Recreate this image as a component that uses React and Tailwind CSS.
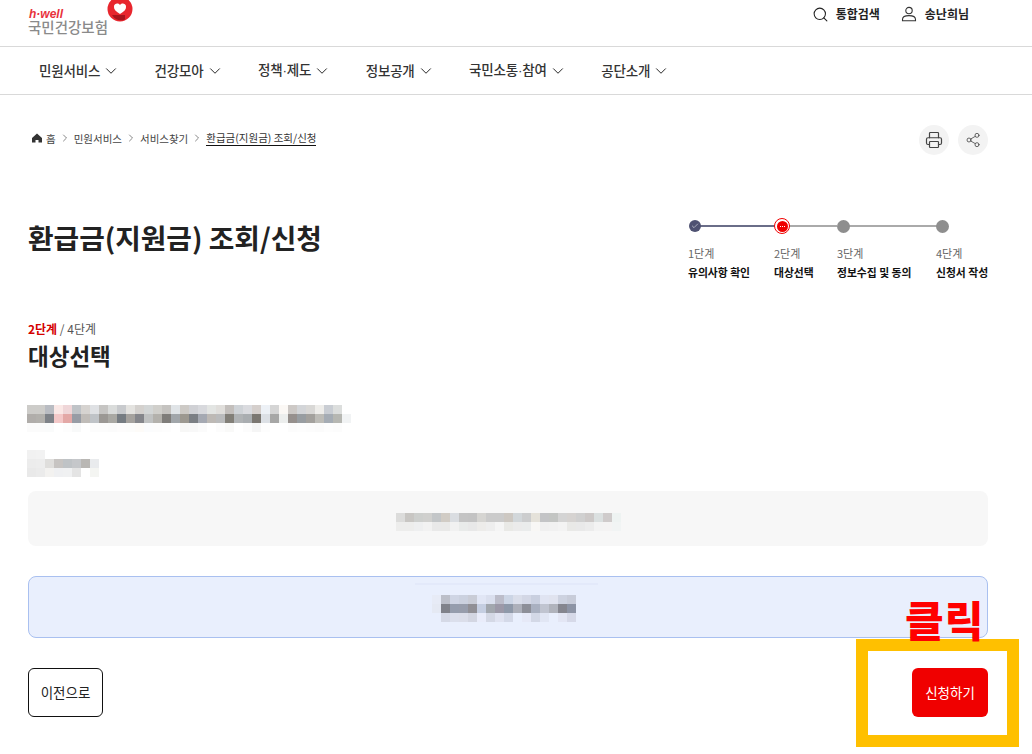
import { ChevronDown, ChevronRight, Search, Printer, Share2, Check } from "lucide-react";

const NAV_ITEMS = ["민원서비스", "건강모아", "정책·제도", "정보공개", "국민소통·참여", "공단소개"];

const STEPS = [
  { label: "1단계", name: "유의사항 확인", state: "done", width: "w-[62px]" },
  { label: "2단계", name: "대상선택", state: "current", width: "w-[39px]" },
  { label: "3단계", name: "정보수집 및 동의", state: "todo", width: "w-[75px]" },
  { label: "4단계", name: "신청서 작성", state: "last", width: "w-[52px]" },
];

// blurred-out personal data, one array per row of the mosaic
const BLUR_NOTICE = [
  ["#cdccc9", "#cdccc9", "#b9bcc2", "#fae8e6", "#efd6d8", "#bfc3c7", "#d6d3d0", "#dfe1e4", "#c6c5c3", "#dadcdb", "#c8cacd", "#e4e3e0", "#d4d1ce", "#d3d6d6", "#d0cfcb", "#c5c3c0", "#e0e4e7", "#cdcac6", "#d0d1d5", "#d8d9dd", "#e3e5e3", "#e0dedb", "#c3bfbc", "#cfd3d7", "#dadbdf", "#d5cfcc", "#edf1f6", "#d5d5d5", "#fbf8f5", "#cdc9c6", "#d3d5d8", "#d9d8d6", "#eeedea", "#c9cdd3", "#dcdedd", "#ffffff"],
  ["#b0adaa", "#b2b0ac", "#7e8288", "#f3c8c8", "#e3a8a6", "#979ca5", "#c0bcb8", "#bfc3c7", "#9b9894", "#a9a8a3", "#767c82", "#a5a29e", "#85868b", "#c0c2c2", "#b3b1ac", "#7f7d7a", "#a1a6aa", "#9c9890", "#7b7f84", "#a5a9b2", "#bdb9b5", "#babbbc", "#827f78", "#b0b3b5", "#a9adb0", "#7b7771", "#dce0e5", "#a7a7a6", "#eceeed", "#96908d", "#989da1", "#a3a19d", "#bdbcb7", "#a5acb4", "#b6b7b2", "#f1f3f4"],
  ["#fbfbfb", "#fbfbfb", "#fafbfb", "#ffffff", "#fdfdfd", "#f8f9f9", "#ffffff", "#fcfcfc", "#fcfcfc", "#fbfbfb", "#fdfcfc", "#fcfcfb", "#fdfbf8", "#fbfcfd", "#fcfcfc", "#fdfdfd", "#ffffff", "#f7f7f6", "#f8f8f8", "#fbfbfb", "#ffffff", "#fcfcfc", "#f9f9f8", "#ffffff", "#fcfcfc", "#f5f5f5", "#fdfdfd", "#ffffff", "#ffffff", "#fcfcfc", "#fdfdfd", "#fcfcfc", "#fbfbfb", "#fdfdfd", "#fcfcfc", "#ffffff"],
];

const BLUR_NAME = [
  ["#f1f1f1", "#f2f2f2", "#ffffff", "#ffffff", "#ffffff", "#ffffff", "#ffffff", "#ffffff"],
  ["#ececec", "#ededed", "#dfdedc", "#c7c4c2", "#bfc3c6", "#c5c7ca", "#b9b7b4", "#e9ebed"],
  ["#e9e9e9", "#ebebeb", "#f3f2f0", "#eff0f2", "#f0f1f2", "#e4e4e4", "#ffffff", "#f4f5f2"],
];

const BLUR_INFO = [
  ["#dcdcdb", "#c8c6c3", "#cdcfcd", "#d0d0ce", "#c3c6c8", "#d1ccc5", "#dadde1", "#c4c4c4", "#c3c3c3", "#d6d5d2", "#cbcbcb", "#cbcbcb", "#cdc8c2", "#d2d7da", "#cccdce", "#e5e2da", "#c3c4c6", "#c3c5c3", "#d4d4d4", "#d6d3d1", "#d0d0d0", "#cdc9c8", "#dbe0e0", "#cfcbcb", "#eef3f2"],
  ["#ededec", "#ededec", "#eeeff0", "#f2f2f2", "#e9e9e9", "#e9e9e8", "#f1f1f1", "#e9ebea", "#e8e8e8", "#edecea", "#eeeeee", "#f5f5f5", "#e9e9e6", "#ebebeb", "#eaecec", "#f8f7f5", "#f0f0f0", "#f1f1f1", "#f3f3f3", "#e9e9e7", "#e9e9e9", "#ececec", "#f3f3f3", "#f4f3f3", "#f1f4f4"],
];

const BLUR_BUTTON = [
  ["#e7ebf6", "#bcbfc9", "#cfd5e4", "#cbd1df", "#c9ccd6", "#e1e6f5", "#dadfee", "#bcbdca", "#ccd5e5", "#dadeea", "#d3d7e5", "#c9cfdf", "#e0e4f2", "#e0e3ef", "#cdd2e0", "#c8ccd9"],
  ["#e5e9f3", "#80828a", "#959dad", "#979dac", "#908f95", "#c5cee1", "#a2a7ae", "#9c99a8", "#8f99a9", "#adb0ba", "#8d8f98", "#a9b0c0", "#c0c4d0", "#b0b3bc", "#85868f", "#8d94a5"],
  ["#e9effd", "#d5d9e6", "#dbdfec", "#dbdeea", "#d3d6e2", "#e9ecfa", "#d4d8e5", "#e0e3f1", "#d4d9e8", "#e9effd", "#e6e9f7", "#d3d8e6", "#e1e6f4", "#e9effd", "#e3e6f4", "#d6d9e8"],
];

const Mosaic = ({ rows, size }) => (
  <div>
    {rows.map((row, y) => (
      <div key={y} className="flex">
        {row.map((color, x) => (
          <div key={x} style={{ width: size, height: size, background: color }} />
        ))}
      </div>
    ))}
  </div>
);

const StepDot = ({ state }) => {
  if (state === "done") {
    return (
      <div className="ml-[1px] flex h-[12px] w-[12px] items-center justify-center rounded-full bg-[#4f5272]">
        <Check size={8} strokeWidth={2} className="text-[#d5d6e0]" />
      </div>
    );
  }
  if (state === "current") {
    return (
      <div className="flex h-[16px] w-[16px] items-center justify-center rounded-full border border-[#f00000] bg-white">
        <div className="flex h-[11px] w-[11px] items-center justify-center gap-[1px] rounded-full bg-[#f00000]">
          <span className="h-[1px] w-[1px] bg-white" />
          <span className="h-[1px] w-[1px] bg-white" />
          <span className="h-[1px] w-[1px] bg-white" />
        </div>
      </div>
    );
  }
  return <div className="h-[13px] w-[13px] rounded-full bg-[#8e8e8e]" />;
};

const Stepper = () => (
  <div className="mt-[63px] flex gap-[24px]">
    {STEPS.map((step, index) => (
      <div key={step.label} className={`relative ${step.width}`}>
        {index < 3 && (
          <div
            className={`absolute left-[8px] top-[7px] h-[2px] ${
              step.state === "done" ? "bg-[#6a6d88]" : "bg-[#aaaaaa]"
            } ${index === 0 ? "w-[80px]" : index === 1 ? "w-[55px]" : "w-[92px]"}`}
          />
        )}
        <div className="relative flex h-[16px] items-center">
          <StepDot state={step.state} />
        </div>
        <div className="mt-[10px] whitespace-nowrap text-[11px] leading-[18px] text-[#666666]">{step.label}</div>
        <div className="mt-[1px] whitespace-nowrap text-[10.8px] font-bold leading-[18px] text-[#111111]">{step.name}</div>
      </div>
    ))}
  </div>
);

const NavLabel = ({ text }) => {
  // the middle dot comes out narrower in the reference
  const [left, right] = text.split("·");
  if (!right) return <span>{text}</span>;
  return (
    <span>
      {left}
      <span className="font-['Liberation_Sans',sans-serif]">·</span>
      {right}
    </span>
  );
};

export default function App() {
  return (
    <div className="relative h-[754px] w-[1032px] overflow-hidden bg-white font-['Noto_Sans_CJK_KR',sans-serif] text-[#222222]">
      {/* top header */}
      <header className="flex h-[47px] items-start justify-between border-b border-[#d9d9d9] pl-[28px] pr-[63px]">
        <div className="relative h-[36px] w-[110px]">
          <div className="absolute left-[1px] top-[9px] font-['Liberation_Sans',sans-serif] text-[12px] font-bold italic leading-[10px] text-[#e8323c]">
            h·well
          </div>
          <div className="absolute left-0 top-[19px] whitespace-nowrap text-[14.5px] font-medium leading-[15px] text-[#8a8a8a]">
            국민건강보험
          </div>
          <svg className="absolute left-[79px] top-[-4px]" width="26" height="27" viewBox="0 0 26 27">
            <circle cx="13" cy="13" r="12.5" fill="#e8262e" />
            <path d="M5 19 L18 19 L18 23.5 C13 25.5 8 24 5 19Z" fill="#a8141c" />
            <path d="M13 18 C8.5 15.5 6.5 13 7 10 C7.5 7.5 11 6.5 13 9 C15 6.5 18.5 7.5 19 10 C19.5 13 17.5 15.5 13 18Z" fill="#ffffff" />
          </svg>
        </div>
        <div className="flex h-[28px] items-center gap-[21px] text-[12px] font-bold text-[#222222]">
          <div className="flex items-center gap-[7px]">
            <Search size={17} strokeWidth={1.5} />
            <span>통합검색</span>
          </div>
          <div className="flex items-center gap-[8px]">
            <svg width="16" height="16" viewBox="0 0 16 16" fill="none" stroke="#333333" strokeWidth="1.1">
              <circle cx="8" cy="4.6" r="3.2" />
              <path d="M1.5 14.8 V13.4 C1.5 11 4.5 9.6 8 9.6 C11.5 9.6 14.5 11 14.5 13.4 V14.8 Z" />
            </svg>
            <span>송난희님</span>
          </div>
        </div>
      </header>

      {/* main nav */}
      <nav className="flex h-[48px] items-center gap-[34.5px] border-b border-[#d9d9d9] pl-[39px]">
        {NAV_ITEMS.map((item) => (
          <div key={item} className="flex items-center gap-[2px] text-[13.5px] font-medium tracking-[-0.2px] text-[#333333]">
            <NavLabel text={item} />
            <ChevronDown size={18} strokeWidth={1.3} className="text-[#222222]" />
          </div>
        ))}
      </nav>

      <main className="pl-[28px] pr-[44px]">
        {/* breadcrumb and actions */}
        <div className="flex items-center justify-between pt-[30px]">
          <div className="flex items-center gap-[3px] pb-[4px] pl-[4px] text-[10.5px] leading-[15px] text-[#444444]">
            <svg className="mr-[1px]" width="10" height="10" viewBox="0 0 10 10">
              <path d="M5 .5 L10 5 V9.5 H6.5 V7 H3.5 V9.5 H0 V5Z" fill="#333333" />
            </svg>
            <span>홈</span>
            <ChevronRight size={12} strokeWidth={1.4} className="text-[#555555]" />
            <span>민원서비스</span>
            <ChevronRight size={12} strokeWidth={1.4} className="text-[#555555]" />
            <span>서비스찾기</span>
            <ChevronRight size={12} strokeWidth={1.4} className="text-[#555555]" />
            <span className="border-b border-[#111111] text-[#333333]">환급금(지원금) 조회/신청</span>
          </div>
          <div className="flex gap-[9px]">
            <div className="flex h-[30px] w-[30px] items-center justify-center rounded-full bg-[#f3f3f3] text-[#444444]">
              <Printer size={18} strokeWidth={1.6} />
            </div>
            <div className="flex h-[30px] w-[30px] items-center justify-center rounded-full bg-[#f3f3f3] text-[#444444]">
              <Share2 size={16} strokeWidth={1.2} />
            </div>
          </div>
        </div>

        {/* title and stepper */}
        <div className="flex items-start justify-between">
          <h1 className="mt-[60px] text-[27.8px] font-bold leading-[44px] text-[#222222]">환급금(지원금) 조회/신청</h1>
          <Stepper />
        </div>

        <div className="mt-[40px] text-[12px] leading-[16px] text-[#555555]">
          <span className="font-bold text-[#d40000]">2단계</span> / 4단계
        </div>
        <h2 className="mt-[2px] text-[22.5px] font-bold leading-[32px] text-[#222222]">대상선택</h2>

        <div className="-ml-[1px] mt-[34px]">
          <Mosaic rows={BLUR_NOTICE} size={9} />
        </div>
        <div className="-ml-[1px] mt-[18px]">
          <Mosaic rows={BLUR_NAME} size={9} />
        </div>

        <div className="mt-[14px] flex h-[55px] items-center justify-center rounded-[8px] bg-[#f7f7f7] pt-[7px]">
          <Mosaic rows={BLUR_INFO} size={9} />
        </div>

        <div className="relative mt-[30px] flex h-[62px] items-center justify-center rounded-[8px] border border-[#a9c0f0] bg-[#e9effd] pr-[8px] pt-[2px]">
          <div className="absolute left-[386px] top-[6px] h-[2px] w-[183px] bg-[#e3e9fa]" />
          <Mosaic rows={BLUR_BUTTON} size={9} />
        </div>

        <div className="mt-[30px] flex items-center justify-between">
          <button className="h-[49px] w-[75px] rounded-[6px] border border-[#111111] bg-white text-[13.5px] text-[#222222]">
            이전으로
          </button>
          <button className="h-[49px] w-[76px] rounded-[6px] bg-[#f00000] text-[13.5px] text-white">신청하기</button>
        </div>
      </main>

      {/* hand-drawn annotation over the screenshot */}
      <div className="absolute left-[856px] top-[639px] h-[108px] w-[163px] border-[12px] border-[#ffc000]" />
      <div className="absolute left-[905px] top-[594px] text-[42px] font-black leading-[50px] tracking-[1px] text-[#ff0000]">
        클릭
      </div>
    </div>
  );
}
